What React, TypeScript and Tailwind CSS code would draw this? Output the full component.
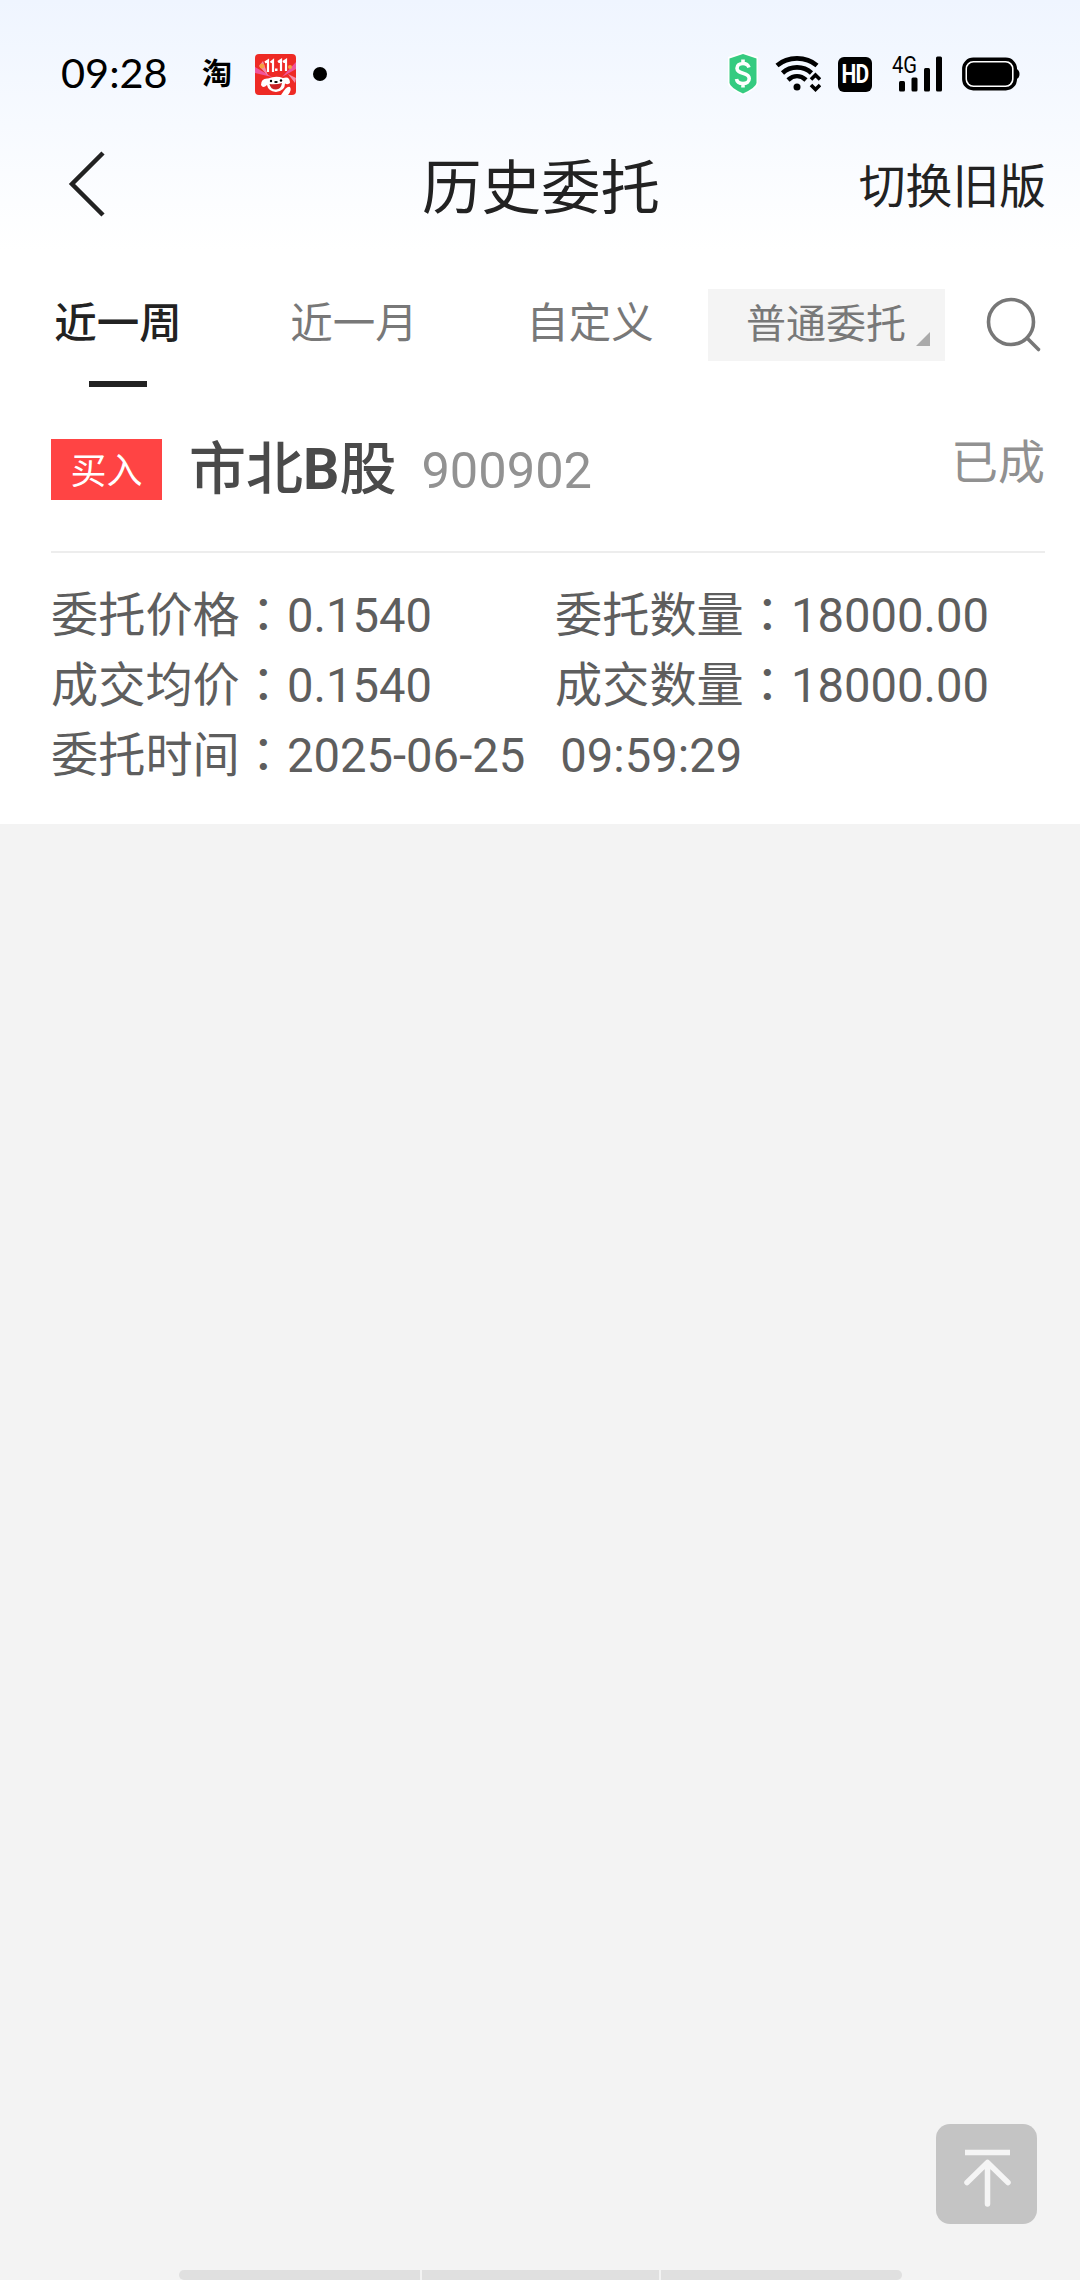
import React, { useState } from "react";

const tabs = ["近一周", "近一月", "自定义"];

const order = {
  side: "买入",
  code: "900902",
  status: "已成",
  price: "0.1540",
  amount: "18000.00",
  avgPrice: "0.1540",
  dealAmount: "18000.00",
  time: "2025-06-25   09:59:29",
};

const ShieldIcon = () => (
  <svg width="34" height="44" viewBox="0 0 34 44" className="ml-auto">
    <path d="M17 0 L32 5 V32 Q31 37 17 43 Q3 37 2 32 V5 Z" fill="#fff" />
    <path d="M17 2 L30.500 6.500 V31 Q30 35.500 17 41.500 Q4 35.500 3.500 31 V6.500 Z" fill="#35cb80" />
    <path
      d="M23 15.500 C22 12.500 20 11.500 17 11.500 C13.500 11.500 11 13.200 11 16.200 C11 19.500 13.700 20.300 17 21.200 C20.500 22.100 23.200 23.200 23.200 26.500 C23.200 29.800 20.500 31.500 17 31.500 C13.500 31.500 11 30 10.500 27 M17 7.500 V12 M17 31 V35.500"
      fill="none"
      stroke="#fff"
      strokeWidth="3.6"
    />
  </svg>
);

const WifiIcon = () => (
  <svg width="46" height="38" viewBox="0 0 46 38" fill="none" stroke="#000" strokeWidth="4.6" className="ml-[15px]">
    <path d="M2 10.500 C13 1 31 1 42 10.500" />
    <path d="M7.500 18 C15.500 10.500 28.500 10.500 36.500 18" />
    <path d="M13 25 C18.500 20 25.500 20 31 25" />
    <circle cx="22" cy="32" r="3.500" fill="#000" stroke="none" />
    <path d="M36 24.500 L40.500 20 L45 24.500 M36 30 L40.500 34.500 L45 30" strokeWidth="3.600" />
  </svg>
);

const SignalIcon = () => (
  <div className="relative ml-[20px] h-[36px] w-[52px]">
    <span className="absolute -top-[3px] left-0 origin-left scale-x-[0.84] font-['Roboto'] text-[24px] leading-[24px]">
      4G
    </span>
    <svg width="52" height="36" viewBox="0 0 52 36" className="absolute top-0 left-0">
      <rect x="7" y="25" width="6" height="10.500" rx="1.500" />
      <rect x="19.500" y="21.500" width="6" height="14" rx="1.500" />
      <rect x="32" y="12" width="6" height="23.500" rx="1.500" />
      <rect x="44" y="0.500" width="6" height="35" rx="1.500" />
    </svg>
  </div>
);

const BatteryIcon = () => (
  <svg width="58" height="34" viewBox="0 0 58 34" className="ml-[18px]">
    <rect x="1.800" y="2.300" width="51.500" height="29.400" rx="9.500" fill="#fff" stroke="#000" strokeWidth="3.400" />
    <rect x="5" y="5.500" width="45" height="23" rx="6.500" />
    <path d="M54 11.500 Q57.500 13 57.500 17 Q57.500 21 54 22.500 Z" />
  </svg>
);

const PromoIcon = () => (
  <svg width="41" height="41" viewBox="0 0 41 41" className="ml-[22px]">
    <rect width="41" height="41" rx="4" fill="#ee2a25" />
    <path d="M0 13 L17 23 L0 19 Z M41 8 L27 23 L41 15 Z" fill="#f0559a" />
    <path d="M8 7 L13 22 L4 12 Z M33 20 L41 24 L40 29 Z" fill="#f58aa8" />
    <circle cx="7" cy="12" r="2.500" fill="#f5a040" />
    <circle cx="35" cy="13" r="2" fill="#f5a040" />
    <path d="M10 8.500 L13 6.500 V18 M15.500 8.500 L18 6.500 V18 M23 8 L26 6 V17 M28 8 L31 6 V17" fill="none" stroke="#fff" strokeWidth="2.200" />
    <rect x="20" y="14.500" width="2.500" height="2.500" fill="#fff" />
    <path d="M6 31 Q6 24 13 24.500 Q21 21.500 28 24 Q35 21.500 35 29 Q33 31 30 29.500 Q30 37 21 38 Q13 37 12 31 Q8 35 6 31 Z" fill="#fff" />
    <path d="M26 41 Q32 31 35 33 Q37 36 33 41 Z" fill="#fff" />
    <path d="M14.500 30 Q21 31 27 29 Q26 35.500 21 35.500 Q15.500 35.500 14.500 30 Z" fill="#c82024" />
    <circle cx="16" cy="27" r="1.200" />
    <circle cx="26" cy="26.500" r="1.200" />
    <ellipse cx="21" cy="28" rx="1.800" ry="1.100" />
  </svg>
);

const StatusBar = () => (
  <div className="flex h-[148px] items-center pr-[60px] pl-[61px] text-black">
    <span className="-mt-[2px] w-[108px] font-['Lato'] text-[41.5px] leading-none whitespace-nowrap">09:28</span>
    <span className="ml-[33px] w-[31px] text-[30px] leading-none font-bold">淘</span>
    <PromoIcon />
    <span className="ml-[17px] size-[14px] rounded-full bg-black" />
    <ShieldIcon />
    <WifiIcon />
    <span className="ml-[17px] flex h-[35px] w-[34px] items-center justify-center rounded-[6px] bg-black text-white">
      <span className="scale-x-[0.84] font-['Roboto'] text-[25px] leading-none font-bold tracking-[-1px]">HD</span>
    </span>
    <SignalIcon />
    <BatteryIcon />
  </div>
);

const Header = () => (
  <div className="grid h-[82px] grid-cols-3 items-center pr-[34px] pl-[68px] text-[#222]">
    <svg width="38" height="68" viewBox="0 0 38 68" fill="none" stroke="#222" strokeWidth="4.500" className="-mt-[11px]">
      <path d="M35 3 L4 34 L35 65" />
    </svg>
    <h1 className="-ml-[32px] pt-px text-center text-[59.5px] leading-[81px] whitespace-nowrap">历史委托</h1>
    <span className="-mt-[4px] text-right text-[46.800px] leading-[78px]">切换旧版</span>
  </div>
);

// Label / value pair, the colon sits in the middle of its square
const Field = ({ label, value }: { label: string; value: string }) => (
  <p className="whitespace-pre">
    {label}
    <span className="font-['Noto_Sans_CJK_TC',sans-serif] leading-none">：</span>
    {value}
  </p>
);

const OrderCard = () => (
  <div className="pr-[35px] pb-[33px] pl-[51px]">
    <div className="flex h-[133px] items-start border-b-2 border-[#ededed]">
      <span className="mt-[19px] h-[61px] w-[111px] bg-[#ff4444] pt-[3px] text-center text-[36px] leading-[61px] text-white">
        {order.side}
      </span>
      <span className="ml-[27px] text-[57px] leading-[99px] font-medium whitespace-nowrap text-[#4a4a4a]">
        市北<b className="font-bold">B</b>股
      </span>
      <span className="ml-[25px] text-[50.600px] leading-[102px] text-[#929292]">{order.code}</span>
      <span className="ml-auto text-[47px] leading-[86px] text-[#919191]">{order.status}</span>
    </div>
    <div className="grid grid-cols-[504px_1fr] pt-[28px] text-[47.200px] leading-[70px] text-[#5e5e5e]">
      <Field label="委托价格" value={order.price} />
      <Field label="委托数量" value={order.amount} />
      <Field label="成交均价" value={order.avgPrice} />
      <Field label="成交数量" value={order.dealAmount} />
      <div className="col-span-2">
        <Field label="委托时间" value={order.time} />
      </div>
    </div>
  </div>
);

const App = () => {
  const [active, setActive] = useState(0);

  return (
    <div className="relative flex h-[2280px] w-[1080px] flex-col overflow-hidden bg-[#f3f3f3] font-['Roboto','Noto_Sans_CJK_SC',sans-serif]">
      <div className="bg-white bg-linear-to-b from-[#eff5ff] to-white to-[250px]">
        <StatusBar />
        <Header />

        {/* Range tabs */}
        <div className="flex h-[190px] text-[#787878]">
          {tabs.map((tab, index) => (
            <button
              key={tab}
              onClick={() => setActive(index)}
              className={`flex w-[236px] flex-col items-center pt-[64px] text-[42.500px] leading-[60px] ${
                active === index ? "font-medium text-[#222]" : ""
              }`}
            >
              {tab}
              {active === index && <span className="mt-[27px] h-[6px] w-[58px] bg-[#222]" />}
            </button>
          ))}
          <div className="mt-[59px] flex h-[72px] w-[237px] items-center bg-[#f4f4f4] pl-[38px] text-[40px] leading-[74px]">
            普通委托
            <svg width="14" height="14" viewBox="0 0 14 14" className="mt-[28px] ml-[10px]">
              <path d="M14 0 V14 H0 Z" fill="#aaa" />
            </svg>
          </div>
          <svg width="58" height="58" viewBox="0 0 58 58" fill="none" stroke="#777" strokeWidth="3.600" className="mt-[66px] ml-[40px]">
            <circle cx="26" cy="26" r="22.500" />
            <path d="M42 42 L53.500 53.500" strokeLinecap="round" />
          </svg>
        </div>

        <OrderCard />
      </div>

      {/* Back to top */}
      <button className="absolute right-[43px] bottom-[56px] h-[100px] w-[101px] rounded-[14px] bg-[#c4c4c4]">
        <svg width="101" height="100" viewBox="0 0 101 100" fill="none" stroke="#f5f5f5" strokeWidth="5.500">
          <path d="M29 28.500 H74" />
          <path d="M51.500 80 V39 M31 58.500 L51.500 38.500 L72 58.500" strokeLinecap="round" strokeLinejoin="round" />
        </svg>
      </button>

      {/* Gesture bar */}
      <div className="mt-auto ml-[179px] flex h-[10px] w-[723px] gap-[2px] overflow-hidden rounded-[5px]">
        <span className="flex-1 bg-[#e0e0e0]" />
        <span className="w-[237px] bg-[#e0e0e0]" />
        <span className="flex-1 bg-[#e0e0e0]" />
      </div>
    </div>
  );
};

export default App;
